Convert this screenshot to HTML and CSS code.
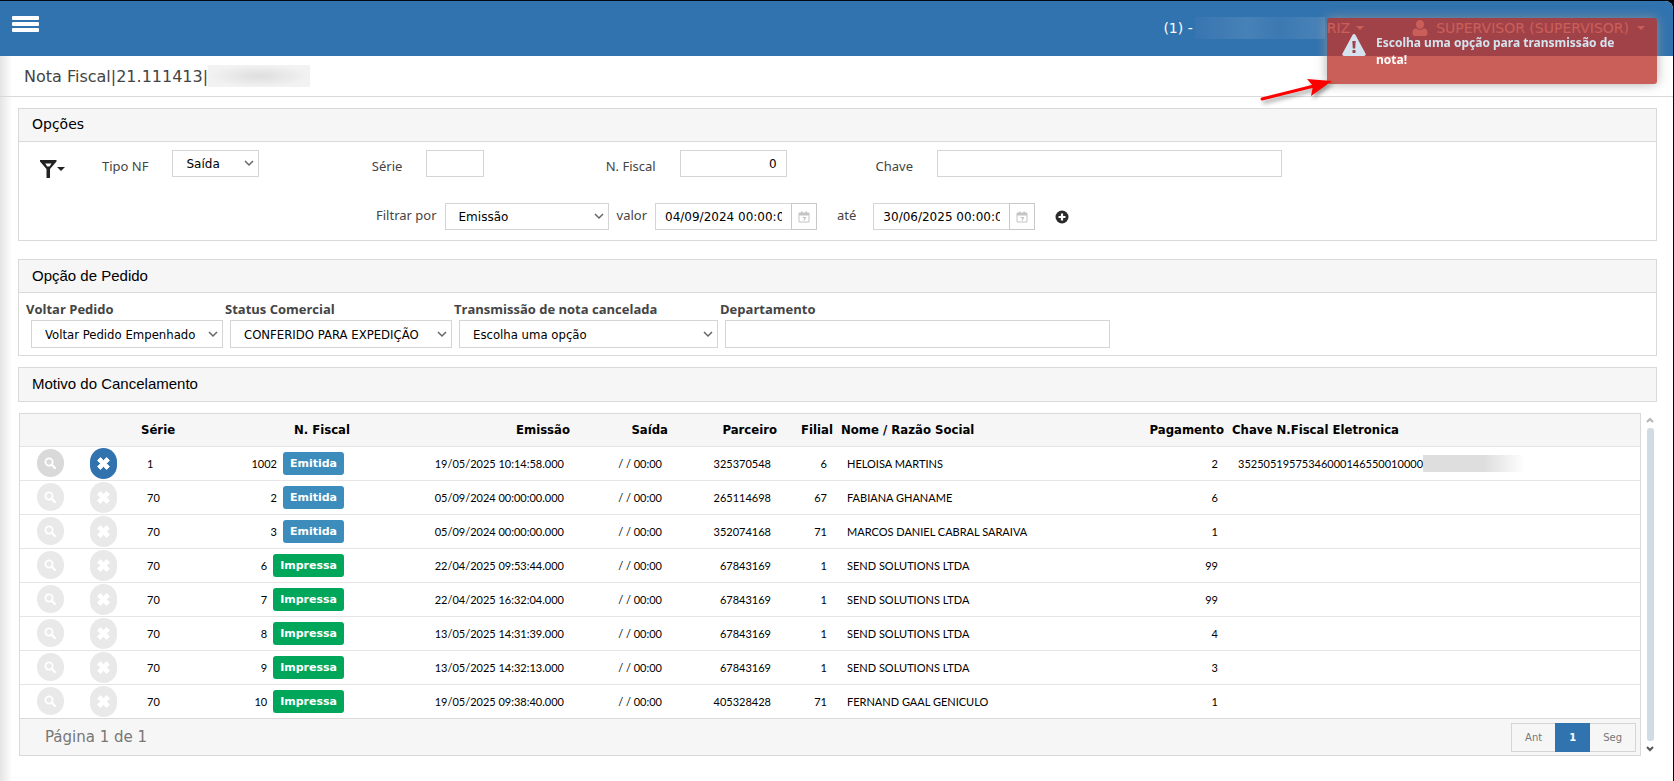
FILE: index.html
```html
<!DOCTYPE html>
<html lang="pt-BR">
<head>
    <meta charset="UTF-8">
    <meta name="viewport" content="width=device-width, initial-scale=1.0">
    <title>Nota Fiscal</title>
    <link rel="stylesheet" href="styles.css">
</head>
<body>
    <!-- shared icons -->
    <svg class="sprite" aria-hidden="true">
        <symbol id="search" viewBox="0 0 12 12">
            <circle cx="5" cy="5" r="3.6" fill="none" stroke="currentColor" stroke-width="1.8"/>
            <path d="M7.6 7.6L11 11" stroke="currentColor" stroke-width="2.2" stroke-linecap="round"/>
        </symbol>
        <symbol id="times" viewBox="0 0 13 13">
            <path d="M3.4 0.6L6.5 3.7L9.6 0.6L12.4 3.4L9.3 6.5L12.4 9.6L9.6 12.4L6.5 9.3L3.4 12.4L0.6 9.6L3.7 6.5L0.6 3.4Z" fill="currentColor" stroke="currentColor" stroke-linejoin="round"/>
        </symbol>
        <symbol id="calendar" viewBox="0 0 12 12">
            <path d="M1 2H11V11H1Z" fill="none" stroke="currentColor"/>
            <path d="M1 2H11V4.500H1Z M3 0.500H4.500V2H3Z M7.500 0.500H9V2H7.500Z M4.500 6H8V7L6.500 9.500H5.300L6.500 7H4.500Z" fill="currentColor"/>
        </symbol>
    </svg>

    <div class="app">
        <header class="topbar">
            <button class="menu-toggle" aria-label="Menu"><span></span><span></span><span></span></button>
            <nav class="top-links">
                <a href="#" class="branch">(1) - <span class="redacted redacted-blue"></span>RIZ <i class="caret"></i></a>
                <a href="#" class="user">
                    <svg width="16" height="16" viewBox="0 0 16 16"><path d="M8 0C10.400 0 12 1.800 12 4.300C12 7 10.300 9 8 9C5.700 9 4 7 4 4.300C4 1.800 5.600 0 8 0ZM4.300 8.300C5.300 9.500 6.500 10 8 10C9.500 10 10.700 9.500 11.700 8.300C14.500 8.700 15.500 10.500 15.500 13.300C15.500 15 14.600 16 13 16H3C1.400 16 0.500 15 0.500 13.300C0.500 10.500 1.500 8.700 4.300 8.300Z" fill="currentColor"/></svg>
                    SUPERVISOR (SUPERVISOR) <i class="caret"></i>
                </a>
            </nav>
        </header>

        <div class="page-title">
            <h1>Nota Fiscal|21.111413|</h1><span class="redacted"></span>
        </div>

        <main class="content">
            <section class="panel">
                <h2 class="panel-title wide">Opções</h2>
                <div class="options">
                    <div class="options-row">
                        <button class="filter" aria-label="Filtro">
                            <svg width="17" height="18" viewBox="0 0 17 18"><path fill-rule="evenodd" d="M0 0H16.500V1.500L10 9V18H6.500V9L0 1.500ZM5.200 3.500L7.200 6.500H9.500L11.500 3.500Z" fill="currentColor"/></svg>
                            <i class="caret"></i>
                        </button>
                        <div class="field">
                            <label for="tipo">Tipo NF</label>
                            <select id="tipo" class="w-tipo"><option>Saída</option></select>
                        </div>
                        <div class="field">
                            <label for="serie">Série</label>
                            <input type="text" id="serie" class="w-serie">
                        </div>
                        <div class="field">
                            <label for="nfiscal">N. Fiscal</label>
                            <input type="text" id="nfiscal" class="w-nfiscal" value="0">
                        </div>
                        <div class="field">
                            <label for="chave">Chave</label>
                            <input type="text" id="chave" class="w-chave">
                        </div>
                    </div>
                    <div class="filter-row">
                        <label for="filtrar">Filtrar por</label>
                        <select id="filtrar" class="w-filtrar"><option>Emissão</option></select>
                        <label for="de">valor</label>
                        <div class="date">
                            <input type="text" id="de" value="04/09/2024 00:00:00">
                            <button aria-label="Abrir calendário"><svg width="12" height="12"><use href="#calendar"/></svg></button>
                        </div>
                        <label for="ate" class="until">até</label>
                        <div class="date">
                            <input type="text" id="ate" value="30/06/2025 00:00:00">
                            <button aria-label="Abrir calendário"><svg width="12" height="12"><use href="#calendar"/></svg></button>
                        </div>
                        <button class="add" aria-label="Adicionar filtro">
                            <svg width="14" height="14" viewBox="0 0 14 14"><circle cx="7" cy="7" r="6.500" fill="#2b2b2b"/><path d="M7 3.500V10.500M3.500 7H10.500" stroke="#fff" stroke-width="2.200"/></svg>
                        </button>
                    </div>
                </div>
            </section>

            <section class="panel">
                <h2 class="panel-title">Opção de Pedido</h2>
                <div class="order">
                    <div class="order-field o-voltar">
                        <label for="voltar">Voltar Pedido</label>
                        <select id="voltar"><option>Voltar Pedido Empenhado</option></select>
                    </div>
                    <div class="order-field o-status">
                        <label for="status">Status Comercial</label>
                        <select id="status"><option>CONFERIDO PARA EXPEDIÇÃO</option></select>
                    </div>
                    <div class="order-field o-trans">
                        <label for="trans">Transmissão de nota cancelada</label>
                        <select id="trans"><option>Escolha uma opção</option></select>
                    </div>
                    <div class="order-field o-depto">
                        <label for="depto">Departamento</label>
                        <input type="text" id="depto">
                    </div>
                </div>
            </section>

            <section class="panel">
                <h2 class="panel-title">Motivo do Cancelamento</h2>
            </section>

            <div class="grid-wrap">
                <div class="grid">
                    <table>
                        <colgroup>
                            <col class="c-view"><col class="c-cancel"><col class="c-serie"><col class="c-emissao"><col class="c-saida"><col class="c-parceiro"><col class="c-filial"><col class="c-nome"><col>
                        </colgroup>
                        <thead>
                            <tr>
                                <th></th>
                                <th></th>
                                <th><div class="split"><span>Série</span><span>N. Fiscal</span></div></th>
                                <th class="num">Emissão</th>
                                <th class="num">Saída</th>
                                <th class="num">Parceiro</th>
                                <th class="num">Filial</th>
                                <th><div class="split"><span>Nome / Razão Social</span><span>Pagamento</span></div></th>
                                <th>Chave N.Fiscal Eletronica</th>
                            </tr>
                        </thead>
                        <tbody id="rows"></tbody>
                    </table>
                    <div class="grid-footer">
                        <span>Página 1 de 1</span>
                        <div class="pager">
                            <button>Ant</button>
                            <button class="current">1</button>
                            <button>Seg</button>
                        </div>
                    </div>
                </div>
                <div class="scrollbar">
                    <svg width="8" height="6" viewBox="0 0 8 6"><path d="M1 5L4 2L7 5" fill="none" stroke="#b5b5b5" stroke-width="2"/></svg>
                    <div class="thumb"></div>
                    <svg width="8" height="6" viewBox="0 0 8 6"><path d="M1 1L4 4L7 1" fill="none" stroke="#555" stroke-width="2"/></svg>
                </div>
            </div>
        </main>
    </div>

    <div class="toast" role="alert">
        <svg width="24" height="22" viewBox="0 0 24 22"><path fill-rule="evenodd" d="M12 0Q12.900 0 13.500 1L23.500 19.500Q24.300 22 22 22H2Q-0.300 22 0.500 19.500L10.500 1Q11.100 0 12 0ZM10.300 7L10.800 14.500H13.200L13.700 7ZM10.500 16V19H13.500V16Z" fill="#fff"/></svg>
        <p>Escolha uma opção para transmissão de nota!</p>
    </div>

    <svg class="pointer" width="80" height="32" viewBox="0 0 80 32" aria-hidden="true">
        <path d="M4 26L60 12" stroke="#f00" stroke-width="3" stroke-linecap="round"/>
        <path d="M74 8L49 6L55 13L53 23Z" fill="#f00"/>
    </svg>

    <script src="app.js"></script>
</body>
</html>
```
FILE: styles.css
```css
* {
    box-sizing: border-box;
}

body {
    margin: 0;
    padding: 1px 1px 0 0;
    min-height: 100vh;
    display: flex;
    background-color: #03070f;
    font-family: "DejaVu Sans", Verdana, sans-serif;
    font-size: 12px;
    color: #000;
}

button {
    font-family: inherit;
    border: none;
    background: none;
    padding: 0;
    cursor: pointer;
}

h1,
h2,
p {
    margin: 0;
}

h1,
h2 {
    font-weight: normal;
}

.sprite {
    position: absolute;
    width: 0;
    height: 0;
}

.app {
    flex: 1;
    min-width: 0;
    background: linear-gradient(to right, #e4e4e4, #fff 12px);
    border-radius: 0 8px 0 0;
    overflow: hidden;
}

/* top bar */
.topbar {
    height: 55px;
    padding: 15px 28px 0 12px;
    display: flex;
    justify-content: space-between;
    align-items: flex-start;
    background-color: #3173af;
}

.menu-toggle {
    width: 27px;
    display: flex;
    flex-direction: column;
    gap: 2px;
}

.menu-toggle span {
    width: 100%;
    height: 4px;
    border-radius: 1px;
    background-color: #fff;
}

.top-links {
    display: flex;
    gap: 48px;
    font-size: 14px;
    line-height: 24px;
}

.top-links a {
    display: flex;
    align-items: center;
    gap: 8px;
    color: #fff;
    text-decoration: none;
    white-space: nowrap;
}

.top-links .branch {
    gap: 2px;
}

.caret {
    border-top: 4px solid currentColor;
    border-left: 4px solid transparent;
    border-right: 4px solid transparent;
}

.branch .caret {
    margin-left: 4px;
}

.redacted {
    width: 102px;
    height: 22px;
    background: radial-gradient(closest-side, #dedede, #f2f2f2);
}

.redacted-blue {
    width: 130px;
    background: linear-gradient(to right, #3875b0, #4781b7 40%, #3c79b2 65%, #4a83b8);
}

.page-title {
    height: 41px;
    display: flex;
    align-items: center;
    border-bottom: 1px solid #d9d9d9;
    padding-left: 24px;
    color: #444;
}

.page-title h1 {
    font-size: 16px;
}

/* panels */
.content {
    padding: 11px 16px 24px 18px;
}

.panel {
    margin-bottom: 11px;
    border: 1px solid #d9d9d9;
    background-color: #fff;
}

.panel:first-child {
    margin-bottom: 18px;
}

.panel-title {
    height: 32px;
    padding: 0 13px;
    font-family: "Liberation Sans", Arial, sans-serif;
    font-size: 15px;
    line-height: 31px;
    background-color: #f6f6f6;
}

.panel-title:only-child {
    height: 33px;
}

.panel-title.wide {
    font-family: inherit;
    font-size: 14px;
}

.options,
.order {
    border-top: 1px solid #d9d9d9;
}

input,
select {
    height: 27px;
    margin: 0;
    padding: 0 9px;
    border: 1px solid #d5d5d5;
    border-radius: 0;
    outline: none;
    background-color: #fff;
    font-family: inherit;
    font-size: 12px;
    color: #000;
}

select {
    appearance: none;
    padding: 0 13px;
    background-image: url("data:image/svg+xml,%3Csvg xmlns='http://www.w3.org/2000/svg' width='10' height='7'%3E%3Cpath d='M1 1L5 5L9 1' fill='none' stroke='%23666' stroke-width='1.500'/%3E%3C/svg%3E");
    background-repeat: no-repeat;
    background-position: right 4px center;
}

.options label {
    font-family: "Noto Sans", "Trebuchet MS", sans-serif;
    font-size: 13px;
    color: #444;
}

.options {
    padding: 8px 0 10px 21px;
}

.options-row {
    display: grid;
    grid-template-columns: 62px 270fr 234fr 270fr 781fr;
    align-items: start;
}

.filter {
    margin-top: 10px;
    display: flex;
    align-items: center;
    color: #222;
}

.field {
    display: flex;
    gap: 24px;
}

.field label {
    line-height: 32px;
    white-space: nowrap;
}

.w-tipo {
    width: 87px;
}

.w-serie {
    width: 58px;
}

.w-nfiscal {
    width: 107px;
    text-align: right;
}

.w-chave {
    flex: 1;
    max-width: 345px;
}

.w-filtrar {
    width: 164px;
}

.filter-row {
    display: flex;
    align-items: center;
    gap: 8px;
    margin-top: 21px;
    padding-left: 336px;
}

.filter-row label {
    height: 27px;
    line-height: 24px;
}

.filter-row .until {
    margin: 0 9px 0 12px;
}

.date {
    display: flex;
}

.date input {
    width: 137px;
}

.date button {
    width: 26px;
    height: 27px;
    margin-left: -1px;
    border: 1px solid #c9c9c9;
    color: #c4c4c4;
    line-height: 0;
}

.add {
    margin-left: 12px;
    line-height: 0;
}

/* order options */
.order {
    display: flex;
    gap: 2px;
    padding: 7px;
}

.order-field {
    display: flex;
    flex-direction: column;
    gap: 2px;
}

.order-field label {
    font-family: "Open Sans", "Noto Sans", sans-serif;
    font-size: 13px;
    font-weight: 700;
    line-height: 18px;
    color: #444;
}

.order-field input,
.order-field select {
    height: 28px;
    margin-left: 5px;
    font-family: "DejaVu Sans Condensed", "DejaVu Sans", sans-serif;
    font-size: 13px;
}

.o-voltar {
    width: 197px;
}

.o-status {
    width: 227px;
}

.o-trans {
    width: 264px;
}

.o-depto {
    width: 390px;
}

/* invoice grid */
.grid-wrap {
    display: flex;
    gap: 5px;
    padding: 0 3px 0 1px;
}

.grid {
    flex: 1;
    min-width: 0;
    border: 1px solid #d9d9d9;
    background-color: #fff;
}

table {
    width: 100%;
    table-layout: fixed;
    border-collapse: collapse;
}

.c-view {
    width: 60px;
}

.c-cancel {
    width: 57px;
}

.c-serie {
    width: 217px;
}

.c-emissao {
    width: 220px;
}

.c-saida {
    width: 98px;
}

.c-parceiro {
    width: 109px;
}

.c-filial {
    width: 56px;
}

.c-nome {
    width: 391px;
}

th {
    height: 32px;
    padding: 0 4px;
    background-color: #f6f6f6;
    font-family: "DejaVu Sans Condensed", "DejaVu Sans", sans-serif;
    font-size: 13px;
    text-align: left;
    white-space: nowrap;
}

td {
    height: 34px;
    padding: 0 10px;
    border-top: 1px solid #e5e5e5;
    font-family: Lato, "Trebuchet MS", sans-serif;
    font-size: 11px;
    white-space: nowrap;
}

th.num,
td.num {
    text-align: right;
}

td:first-child {
    text-align: center;
}

.split {
    display: flex;
    justify-content: space-between;
    align-items: center;
}

.invoice {
    display: flex;
    align-items: center;
    gap: 6px;
}

.badge {
    padding: 0 7px;
    border-radius: 3px;
    background-color: #3c8dbc;
    color: #fff;
    font-family: "DejaVu Sans", Verdana, sans-serif;
    font-size: 11px;
    font-weight: bold;
    line-height: 23px;
}

.badge.impressa {
    background-color: #00a65a;
}

.round {
    width: 27px;
    height: 28px;
    border-radius: 14px;
    background-color: #d9d9d9;
    color: #fff;
    line-height: 0;
    vertical-align: middle;
}

.round.cancel {
    height: 31px;
    background-color: #3173af;
}

.round:disabled {
    background-color: #e9e9e9;
    cursor: default;
}

.key {
    display: flex;
    align-items: center;
}

.key .redacted {
    height: 17px;
    background: linear-gradient(to right, #dedede 60%, #fff);
}

.grid-footer {
    display: flex;
    justify-content: space-between;
    align-items: center;
    height: 37px;
    padding: 0 4px 0 25px;
    border-top: 1px solid #d9d9d9;
    background-color: #f6f6f6;
    font-size: 15px;
    color: #777;
}

.pager {
    display: flex;
    border: 1px solid #d5d5d5;
}

.pager button {
    height: 27px;
    padding: 0 13px;
    font-size: 10px;
    color: #777;
}

.pager .current {
    margin: -1px 0;
    height: 29px;
    padding: 0 14px;
    background-color: #3173af;
    color: #fff;
    font-weight: bold;
}

.scrollbar {
    display: flex;
    flex-direction: column;
    align-items: center;
    gap: 5px;
    padding: 4px 0;
}

.thumb {
    flex: 1;
    width: 7px;
    border-radius: 3px;
    background-color: #d0dbe4;
}

/* notification */
.toast {
    position: fixed;
    top: 18px;
    right: 17px;
    width: 330px;
    min-height: 66px;
    padding: 16px 15px;
    display: flex;
    gap: 10px;
    border-radius: 3px;
    background-color: #bd362f;
    box-shadow: 0 0 12px #999;
    opacity: 0.8;
    color: #fff;
    font-family: "Noto Sans", "Trebuchet MS", sans-serif;
    font-size: 12px;
    font-weight: bold;
    line-height: 17px;
}

.toast svg {
    flex: none;
}

.pointer {
    position: fixed;
    top: 73px;
    right: 336px;
    filter: drop-shadow(2px 3px 2px rgba(0, 0, 0, 0.4));
}
```
FILE: app.js
```js
const rows = [
    ['1', '1002', 'Emitida', '19/05/2025 10:14:58.000', '325370548', '6', 'HELOISA MARTINS', '2', '35250519575346000146550010000'],
    ['70', '2', 'Emitida', '05/09/2024 00:00:00.000', '265114698', '67', 'FABIANA GHANAME', '6', ''],
    ['70', '3', 'Emitida', '05/09/2024 00:00:00.000', '352074168', '71', 'MARCOS DANIEL CABRAL SARAIVA', '1', ''],
    ['70', '6', 'Impressa', '22/04/2025 09:53:44.000', '67843169', '1', 'SEND SOLUTIONS LTDA', '99', ''],
    ['70', '7', 'Impressa', '22/04/2025 16:32:04.000', '67843169', '1', 'SEND SOLUTIONS LTDA', '99', ''],
    ['70', '8', 'Impressa', '13/05/2025 14:31:39.000', '67843169', '1', 'SEND SOLUTIONS LTDA', '4', ''],
    ['70', '9', 'Impressa', '13/05/2025 14:32:13.000', '67843169', '1', 'SEND SOLUTIONS LTDA', '3', ''],
    ['70', '10', 'Impressa', '19/05/2025 09:38:40.000', '405328428', '71', 'FERNAND GAAL GENICULO', '1', '']
];

document.getElementById('rows').innerHTML = rows.map(([serie, numero, status, emissao, parceiro, filial, nome, pagamento, chave], i) => {
    const off = i === 0 ? '' : 'disabled';
    return `
    <tr>
        <td><button class="round" aria-label="Ver nota" ${off}><svg width="12" height="12"><use href="#search"/></svg></button></td>
        <td><button class="round cancel" aria-label="Cancelar nota" ${off}><svg width="13" height="13"><use href="#times"/></svg></button></td>
        <td><div class="split"><span>${serie}</span><span class="invoice">${numero} <span class="badge ${status.toLowerCase()}">${status}</span></span></div></td>
        <td class="num">${emissao}</td>
        <td class="num">/ / 00:00</td>
        <td class="num">${parceiro}</td>
        <td class="num">${filial}</td>
        <td><div class="split"><span>${nome}</span><span>${pagamento}</span></div></td>
        <td>${chave ? `<span class="key">${chave}<span class="redacted"></span></span>` : ''}</td>
    </tr>`;
}).join('');
```
